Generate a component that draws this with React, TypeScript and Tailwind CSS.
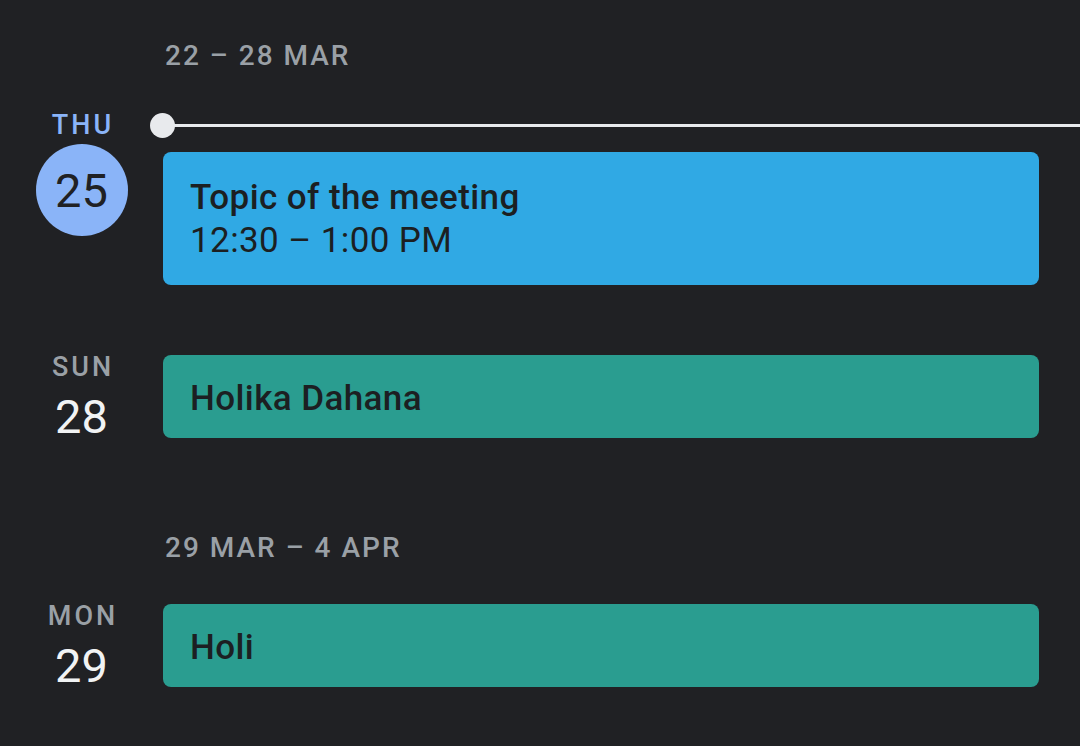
type Day = {
  weekday: string;
  date: number;
  today?: boolean;
  events: { title: string; time?: string; color: string }[];
};

type Week = { label: string; days: Day[] };

const weeks: Week[] = [
  {
    label: "22 – 28 Mar",
    days: [
      {
        weekday: "Thu",
        date: 25,
        today: true,
        events: [{ title: "Topic of the meeting", time: "12:30 – 1:00 PM", color: "blue" }],
      },
      { weekday: "Sun", date: 28, events: [{ title: "Holika Dahana", color: "green" }] },
    ],
  },
  {
    label: "29 Mar – 4 Apr",
    days: [{ weekday: "Mon", date: 29, events: [{ title: "Holi", color: "green" }] }],
  },
];

function DayRow({ day }: { day: Day }) {
  return (
    <div className="flex items-start">
      {/* Date column */}
      <div className="w-[163px] shrink-0 flex flex-col items-center">
        <div
          className={
            "text-[27px] leading-none font-medium tracking-[3px] pl-[3px] uppercase " +
            (day.today ? "text-[#8ab4f8]" : "text-[#9aa0a6]")
          }
        >
          {day.weekday}
        </div>
        {day.today ? (
          <div className="mt-[5px] w-[92px] h-[92px] rounded-full bg-[#8ab4f8] flex items-center justify-center text-[47px] leading-none text-[#202124]">
            {day.date}
          </div>
        ) : (
          <div className="mt-[12px] text-[47px] leading-none text-[#f1f3f4]">{day.date}</div>
        )}
      </div>

      {/* Events */}
      <div className="flex-1 flex flex-col">
        {day.today && (
          <div className="flex items-center -ml-[13px] mt-[1px] h-[25px]">
            <div className="w-[25px] h-[25px] rounded-full bg-[#e8eaed] shrink-0" />
            <div className="flex-1 h-[3px] bg-[#e8eaed] -ml-[1px]" />
          </div>
        )}
        {day.events.map((ev) =>
          ev.time ? (
            <div
              key={ev.title}
              className="mt-[14px] mr-[41px] rounded-[8px] bg-[#30a9e4] px-[27px] pt-[24px] pb-[23px] text-[#1c1f22] text-[35px] tracking-[0.4px] leading-[43px]"
            >
              <div className="font-medium">{ev.title}</div>
              <div>{ev.time}</div>
            </div>
          ) : (
            <div
              key={ev.title}
              className="mt-[1px] mr-[41px] h-[83px] rounded-[8px] bg-[#2a9d90] px-[27px] pt-[4px] flex items-center text-[#1c1f22] text-[35px] tracking-[0.4px] font-medium leading-none"
            >
              {ev.title}
            </div>
          )
        )}
      </div>
    </div>
  );
}

export default function App() {
  return (
    <div className="w-full h-[746px] overflow-hidden bg-[#202124] font-[Roboto,sans-serif]">
      {/* Week 1 */}
      <div className="pl-[165px] pt-[42px] text-[28px] leading-none font-medium tracking-[2px] uppercase text-[#9aa0a6]">
        {weeks[0].label}
      </div>
      <div className="mt-[42px] flex flex-col gap-[69px]">
        {weeks[0].days.map((d) => (
          <DayRow key={d.date} day={d} />
        ))}
      </div>

      {/* Week 2 */}
      <div className="mt-[94px] pl-[165px] text-[28px] leading-none font-medium tracking-[2px] uppercase text-[#9aa0a6]">
        {weeks[1].label}
      </div>
      <div className="mt-[41px] flex flex-col">
        {weeks[1].days.map((d) => (
          <DayRow key={d.date} day={d} />
        ))}
      </div>
    </div>
  );
}
